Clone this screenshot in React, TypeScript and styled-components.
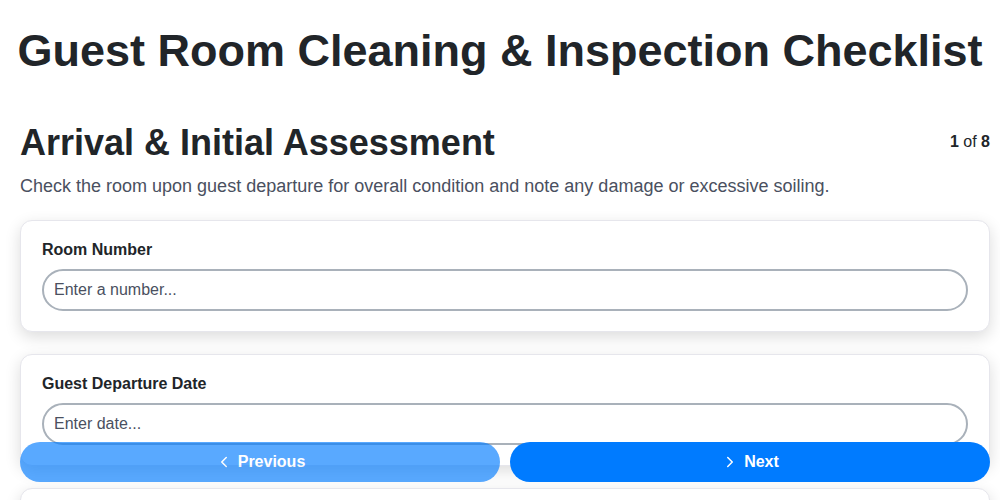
import React from 'react'
import styled, { createGlobalStyle } from 'styled-components'
import { ChevronLeft, ChevronRight } from 'lucide-react'

const Global = createGlobalStyle`
  body {
    margin: 0;
    font-family: "Liberation Sans", Arial, sans-serif;
    color: #212529;
    background: #fff;
  }
`

const fields = [
  { label: 'Room Number', placeholder: 'Enter a number...' },
  { label: 'Guest Departure Date', placeholder: 'Enter date...' },
  { label: 'Overall Room Condition', placeholder: 'Select...' },
]

const App = () => {
  return (
    <>
      <Global />
      <Title>Guest Room Cleaning &amp; Inspection Checklist</Title>
      <Page>
        <Head>
          <Section>Arrival &amp; Initial Assessment</Section>
          <Step><b>1</b> of <b>8</b></Step>
        </Head>
        <Desc>
          Check the room upon guest departure for overall condition and note any damage or excessive soiling.
        </Desc>
        <List>
          {fields.map(f => (
            <Card key={f.label}>
              <Label>{f.label}</Label>
              <Input placeholder={f.placeholder} />
            </Card>
          ))}
        </List>
      </Page>
      <Nav>
        <NavButton $dim>
          <ChevronLeft size={18} strokeWidth={2} /> Previous
        </NavButton>
        <NavButton>
          <ChevronRight size={18} strokeWidth={2} /> Next
        </NavButton>
      </Nav>
    </>
  )
}

const Title = styled.h1`
  margin: 0;
  padding: 24px 0 44px;
  text-align: center;
  font-size: 45px;
  line-height: 54px;
  font-weight: 700;
  white-space: nowrap;
`
const Page = styled.div`
  padding: 0 10px 0 20px;
`
const Head = styled.div`
  display: flex;
  justify-content: space-between;
  align-items: center;
`
const Section = styled.h2`
  margin: 0;
  font-size: 36px;
  line-height: 42px;
  font-weight: 700;
`
const Step = styled.div`
  font-size: 16px;
  color: #212529;
  padding-bottom: 2px;
`
const Desc = styled.p`
  margin: 11px 0 23px;
  font-size: 18px;
  line-height: 22px;
  color: #4a5060;
`
const List = styled.div`
  display: flex;
  flex-direction: column;
  gap: 22px;
`
const Card = styled.div`
  background: #fff;
  border: 1px solid #e6e6ec;
  border-radius: 12px;
  padding: 19px 21px 20px;
  box-shadow: 0 5px 16px rgba(0, 0, 0, 0.14);
`
const Label = styled.div`
  font-size: 16px;
  font-weight: 700;
  line-height: 19px;
  margin-bottom: 10px;
`
const Input = styled.input`
  box-sizing: border-box;
  width: 100%;
  height: 42px;
  border: 2px solid #a9b1ba;
  border-radius: 21px;
  padding: 0 10px;
  font-family: "Liberation Sans", Arial, sans-serif;
  font-size: 16px;
  color: #212529;
  outline: none;
  &::placeholder {
    color: #4a5060;
  }
`
const Nav = styled.div`
  position: fixed;
  left: 20px;
  right: 10px;
  bottom: 18px;
  display: grid;
  grid-template-columns: 1fr 1fr;
  gap: 10px;
`
const NavButton = styled.button<{ $dim?: boolean }>`
  height: 40px;
  border: none;
  border-radius: 20px;
  background: #007bff;
  opacity: ${p => (p.$dim ? 0.65 : 1)};
  color: #fff;
  font-family: "Liberation Sans", Arial, sans-serif;
  font-size: 16px;
  font-weight: 700;
  display: flex;
  align-items: center;
  justify-content: center;
  gap: 5px;
  cursor: pointer;
`

export default App
